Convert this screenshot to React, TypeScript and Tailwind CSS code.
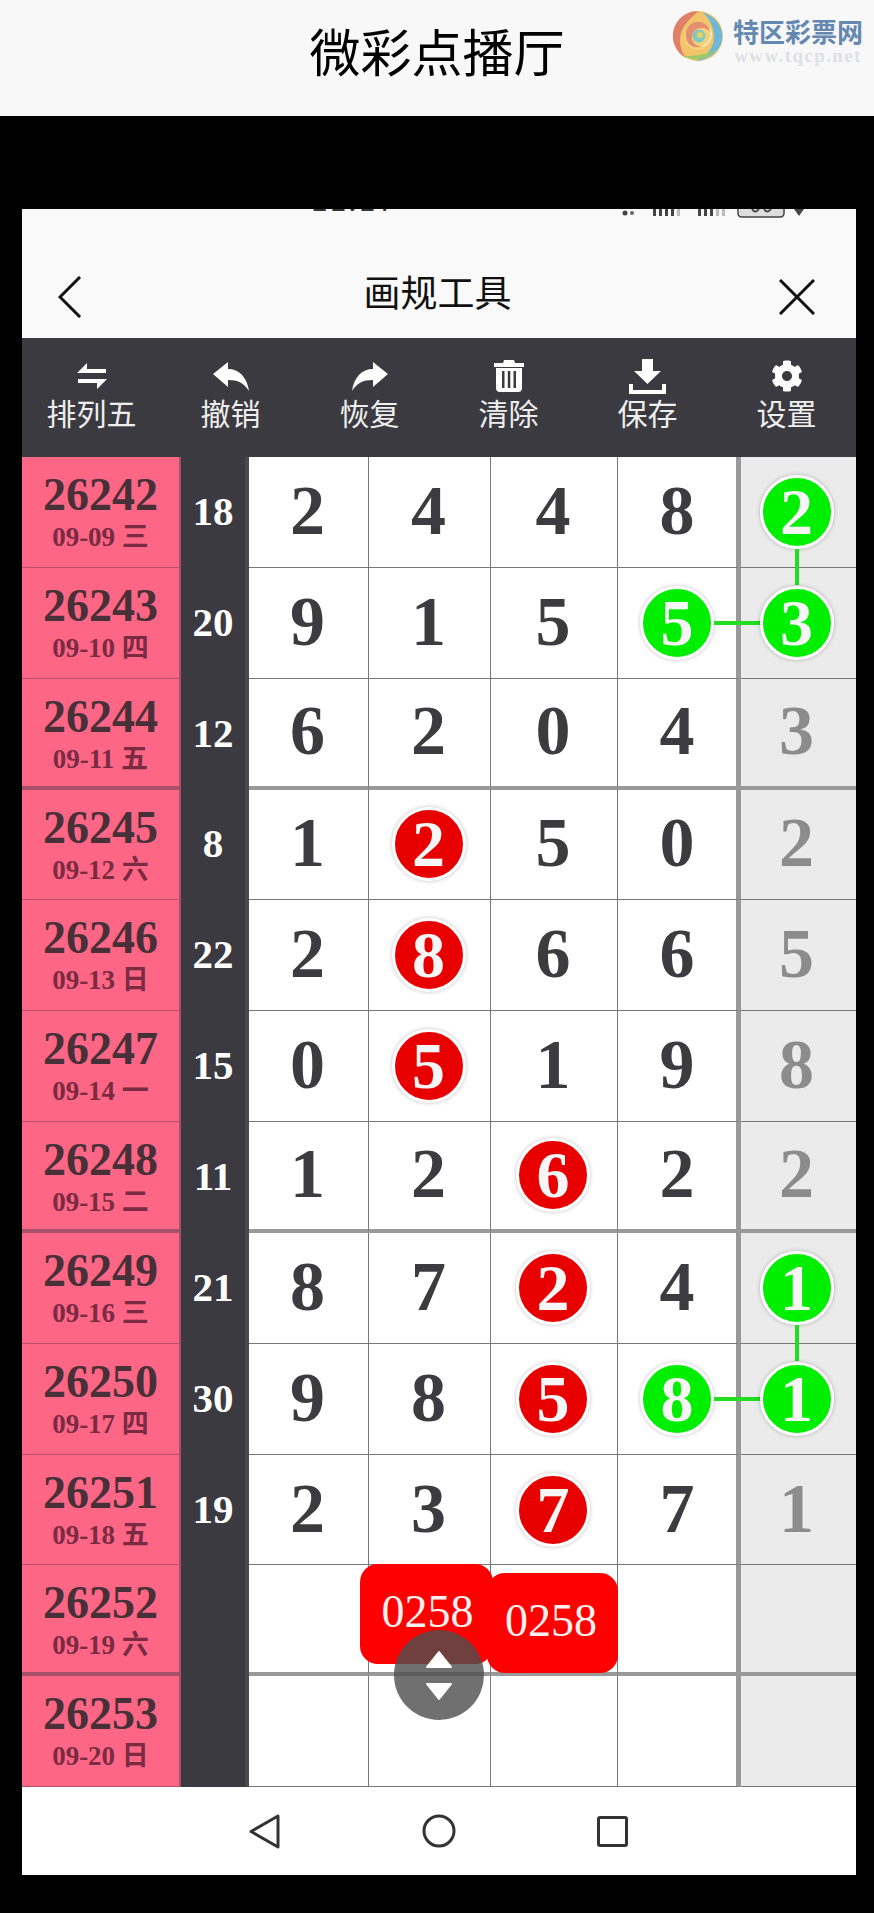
import React from 'react';
import { FaCog } from 'react-icons/fa';

type Mark = { v: number; c?: 'r' | 'g'; down?: boolean; right?: boolean };

const colWidths = ['w-[120px] pr-[2px]', 'w-[122px] pr-[2px]', 'w-[127px] pr-[2px]', 'w-[123px]', 'w-[115px] pr-[4px]'];

const rows: { id: string; date: string; sum: number; nums: (number | Mark)[] }[] = [
  { id: '26242', date: '09-09 三', sum: 18, nums: [2, 4, 4, 8, { v: 2, c: 'g', down: true }] },
  { id: '26243', date: '09-10 四', sum: 20, nums: [9, 1, 5, { v: 5, c: 'g', right: true }, { v: 3, c: 'g' }] },
  { id: '26244', date: '09-11 五', sum: 12, nums: [6, 2, 0, 4, 3] },
  { id: '26245', date: '09-12 六', sum: 8, nums: [1, { v: 2, c: 'r' }, 5, 0, 2] },
  { id: '26246', date: '09-13 日', sum: 22, nums: [2, { v: 8, c: 'r' }, 6, 6, 5] },
  { id: '26247', date: '09-14 一', sum: 15, nums: [0, { v: 5, c: 'r' }, 1, 9, 8] },
  { id: '26248', date: '09-15 二', sum: 11, nums: [1, 2, { v: 6, c: 'r' }, 2, 2] },
  { id: '26249', date: '09-16 三', sum: 21, nums: [8, 7, { v: 2, c: 'r' }, 4, { v: 1, c: 'g', down: true }] },
  { id: '26250', date: '09-17 四', sum: 30, nums: [9, 8, { v: 5, c: 'r' }, { v: 8, c: 'g', right: true }, { v: 1, c: 'g' }] },
  { id: '26251', date: '09-18 五', sum: 19, nums: [2, 3, { v: 7, c: 'r' }, 7, 1] },
  { id: '26252', date: '09-19 六', sum: 0, nums: [] },
  { id: '26253', date: '09-20 日', sum: 0, nums: [] },
];

const Ball = ({ m }: { m: Mark }) => (
  <div
    className={`relative z-10 flex h-[74px] w-[74px] items-center justify-center rounded-full border-[3px] border-white text-[66px] leading-none font-bold text-[#f6f6f6] shadow-[0_0_4px_rgba(0,0,0,0.25)] ${
      m.c === 'r' ? 'bg-[#e80000]' : 'bg-[#00ee00]'
    }`}
  >
    {m.v}
    {m.down && <div className="absolute top-[71px] left-[32px] h-[36px] w-[4px] bg-[#22dd22]" />}
    {m.right && <div className="absolute top-[32px] left-[71px] h-[4px] w-[48px] bg-[#22dd22]" />}
  </div>
);

const SwapIcon = () => (
  <svg width="30" height="26" viewBox="0 0 30 26" fill="#fff">
    <path d="M10 0 L10 6 L29 6 L29 10 L0 10 Z" />
    <path d="M20 26 L20 20 L1 20 L1 16 L30 16 Z" />
  </svg>
);

const UndoIcon = () => (
  <svg width="36" height="29" viewBox="0 0 36 29" fill="#fff">
    <path d="M0 12 L15 0 L15 7 C26 7 34 15 36 29 C31 21 25 18 15 18 L15 25 Z" />
  </svg>
);

const RedoIcon = () => (
  <svg width="36" height="29" viewBox="0 0 36 29" fill="#fff">
    <path d="M36 12 L21 0 L21 7 C10 7 2 15 0 29 C5 21 11 18 21 18 L21 25 Z" />
  </svg>
);

const TrashIcon = () => (
  <svg width="30" height="32" viewBox="0 0 30 32" fill="#fff">
    <path d="M10 0 H20 L21 3 H30 V7 H0 V3 H9 Z" />
    <path fillRule="evenodd" d="M2 8 H28 V28 Q28 32 24 32 H6 Q2 32 2 28 Z M8 11 V28 H10.5 V11 Z M13.8 11 V28 H16.3 V11 Z M19.5 11 V28 H22 V11 Z" />
  </svg>
);

const SaveIcon = () => (
  <svg width="37" height="35" viewBox="0 0 37 35" fill="#fff">
    <path d="M13 0 H24 V12 H32 L18.5 25 L5 12 H13 Z" />
    <path d="M0 25 H4 V31 H33 V25 H37 V35 H0 Z" />
  </svg>
);

const tools = [
  { label: '排列五', icon: <SwapIcon /> },
  { label: '撤销', icon: <UndoIcon /> },
  { label: '恢复', icon: <RedoIcon /> },
  { label: '清除', icon: <TrashIcon /> },
  { label: '保存', icon: <SaveIcon /> },
  { label: '设置', icon: <FaCog size={32} color="#fff" /> },
];

const Logo = () => (
  <svg width="52" height="52" viewBox="0 0 52 52" fill="none" className="blur-[0.6px]">
    <circle cx="26" cy="26" r="25" fill="#f2c56a" />
    <path d="M26 1 A25 25 0 0 0 14 48 C6 38 6 22 14 14 C18 8 24 4 26 1 Z" fill="#e0806a" />
    <path d="M30 2 C44 6 52 18 50 30 C48 42 36 50 24 51 C34 46 42 38 42 28 C42 18 38 8 30 2 Z" fill="#6fb8d8" />
    <path d="M12 46 C22 52 36 50 44 40 C36 44 24 46 12 46 Z" fill="#9cc86a" />
    <circle cx="26" cy="26" r="14" fill="#f4d27a" />
    <path d="M14 26 A12 12 0 0 1 38 22 C34 16 22 16 20 26 C19 32 24 37 30 36 C22 40 14 34 14 26 Z" fill="#e58f72" />
    <circle cx="27" cy="26" r="6.5" fill="#7fc9c4" />
    <circle cx="28" cy="25" r="3" fill="#e8d25a" />
    <path d="M30 36 C38 34 41 26 38 19" stroke="#fff" strokeWidth="1.2" opacity="0.7" />
  </svg>
);

export default function App() {
  return (
    <div className="h-[1913px] bg-black font-['Liberation_Serif','Noto_Sans_CJK_SC',serif] overflow-hidden">
      {/* page header */}
      <header className="relative flex h-[116px] items-center justify-center bg-[#f8f8f8] pb-[16px]">
        <h1 className="font-['Noto_Sans_CJK_SC',sans-serif] text-[51px] leading-none font-normal text-black">微彩点播厅</h1>
        <div className="absolute top-[10px] left-[672px] flex gap-[9px]">
          <Logo />
          <div className="flex flex-col items-center">
            <span className="mt-[8px] font-['Noto_Sans_CJK_SC',sans-serif] text-[26px] leading-[26px] font-bold text-[#6488b0]">特区彩票网</span>
            <span className="mt-[4px] text-[19px] leading-[16px] font-bold tracking-[1.4px] text-[#dfe0e4]">www.tqcp.net</span>
          </div>
        </div>
      </header>

      <div className="h-[93px]" />

      <div className="mx-[22px] w-[834px] bg-white">
        {/* what is left of the phone status bar */}
        <div className="relative h-[9px] overflow-hidden bg-[#f9f9f9]">
          <span className="absolute -top-[29px] left-[289px] font-['Noto_Sans_CJK_SC',sans-serif] text-[30px] leading-[36px] tracking-[2px] text-[#333]">11:17</span>
          <svg width="200" height="9" viewBox="0 0 200 9" className="absolute top-0 left-[598px]">
            <circle cx="5" cy="4" r="2.5" fill="#444" />
            <circle cx="12" cy="4" r="2" fill="#666" />
            <path d="M33 0h3v7h-3zM39 0h3v7h-3zM45 0h3v7h-3zM51 0h3v7h-3z" fill="#444" />
            <path d="M57 0h3v7h-3z" fill="#bbb" />
            <path d="M78 0h3v7h-3zM84 0h3v7h-3zM90 0h3v7h-3z" fill="#444" />
            <path d="M96 0h3v7h-3zM102 0h3v7h-3z" fill="#bbb" />
            <path d="M118 0v4q0 4 4 4h38q4 0 4-4v-4" fill="#ddd" stroke="#444" strokeWidth="1.5" />
            <path d="M132 0q3 5 7 0M144 0q3 5 7 0" fill="none" stroke="#444" strokeWidth="2" />
            <path d="M174 0h10l-5 7z" fill="#444" />
          </svg>
        </div>

        {/* nav bar */}
        <div className="grid h-[120px] grid-cols-[1fr_auto_1fr] items-center bg-[#f9f9f9] pt-[38px] pr-[41px] pl-[36px]">
          <svg width="24" height="42" viewBox="0 0 24 42" fill="none" stroke="#111" strokeWidth="3">
            <path d="M22 1 L2 21 L22 41" />
          </svg>
          <div className="-mt-[12px] ml-[2px] font-['Noto_Sans_CJK_SC',sans-serif] text-[37px] leading-none text-[#111]">画规工具</div>
          <svg width="36" height="36" viewBox="0 0 36 36" fill="none" stroke="#111" strokeWidth="3" className="justify-self-end">
            <path d="M1 1 L35 35 M35 1 L1 35" />
          </svg>
        </div>

        {/* toolbar */}
        <div className="grid h-[119px] grid-cols-6 bg-[#3a3a40] pt-[20px]">
          {tools.map((t) => (
            <div key={t.label} className="flex flex-col items-center">
              <div className="flex h-[36px] items-center justify-center">{t.icon}</div>
              <span className="font-['Noto_Sans_CJK_SC',sans-serif] text-[30px] leading-[36px] text-[#eeeeee]">{t.label}</span>
            </div>
          ))}
        </div>

        {/* number table */}
        <div className="relative flex flex-col">
          {rows.map((r, i) => {
            const thick = i === 2 || i === 6 || i === 10;
            return (
              <div key={r.id} className="flex h-[110.85px]">
                <div
                  className={`flex w-[159px] flex-col items-center border-r-2 border-r-[#a85068] bg-[#fe6686] pt-[12px] ${
                    thick ? 'border-b-4 border-b-[#a85068]' : 'border-b border-b-[#b8506a]'
                  }`}
                >
                  <span className="text-[46px] leading-[52px] font-bold text-[#473038]">{r.id}</span>
                  <span className="mt-[1px] text-[27px] leading-[30px] font-bold text-[#7a2a42]">{r.date}</span>
                </div>
                <div className="flex w-[68px] items-center justify-center border-r-4 border-r-[#4a4a4c] bg-[#3a3a40] pb-[2px] text-[41px] leading-none font-bold text-white">
                  {r.sum > 0 ? r.sum : ''}
                </div>
                {colWidths.map((w, c) => {
                  const n = r.nums[c];
                  const last = c === 4;
                  const right = last ? '' : c === 3 ? 'border-r-[5px] border-r-[#999999]' : 'border-r border-r-[#777777]';
                  const bottom = thick ? 'border-b-4 border-b-[#999999]' : 'border-b border-b-[#777777]';
                  return (
                    <div
                      key={c}
                      className={`flex items-center justify-center text-[70px] leading-none font-bold ${w} ${right} ${bottom} ${
                        last ? 'bg-[#ebebeb] text-[#8c8c8c]' : 'bg-white text-[#3c3c40]'
                      }`}
                    >
                      {typeof n === 'object' ? <Ball m={n} /> : <span className="-mt-[2px]">{n}</span>}
                    </div>
                  );
                })}
              </div>
            );
          })}

          {/* bubbles and the floating scroll button sit over the table */}
          <div className="absolute top-[1107px] left-[338px] z-20 flex h-[100px] w-[133px] items-start justify-center rounded-[18px] bg-[#fe0000] pt-[22px] pl-[2px] text-[46px] leading-[52px] text-[#fdf0f0]">
            0258
          </div>
          <div className="absolute top-[1116px] left-[465px] z-20 flex h-[100px] w-[131px] items-start justify-center rounded-[18px] bg-[#fe0000] pt-[22px] pr-[3px] text-[46px] leading-[52px] text-[#fdf0f0]">
            0258
          </div>
          <div className="absolute top-[1173px] left-[372px] z-30 flex h-[90px] w-[90px] flex-col items-center justify-center gap-[13px] rounded-full bg-[rgba(79,79,79,0.81)]">
            <svg width="28" height="19" viewBox="0 0 28 19" fill="#fff" stroke="#fff" strokeWidth="2" strokeLinejoin="round">
              <path d="M14 2 L26 17 H2 Z" />
            </svg>
            <svg width="28" height="19" viewBox="0 0 28 19" fill="#fff" stroke="#fff" strokeWidth="2" strokeLinejoin="round">
              <path d="M14 17 L26 2 H2 Z" />
            </svg>
          </div>
        </div>

        {/* android nav buttons */}
        <div className="flex h-[88px] items-center justify-center gap-[141px] bg-white pr-[2px]">
          <svg width="32" height="35" viewBox="0 0 32 35" fill="none" stroke="#333" strokeWidth="3" strokeLinejoin="round">
            <path d="M29 2 V33 L2 17.5 Z" />
          </svg>
          <svg width="34" height="34" viewBox="0 0 34 34" fill="none" stroke="#333" strokeWidth="3">
            <circle cx="17" cy="17" r="15" />
          </svg>
          <svg width="31" height="31" viewBox="0 0 31 31" fill="none" stroke="#333" strokeWidth="3" strokeLinejoin="round">
            <rect x="1.5" y="1.5" width="28" height="28" rx="1.5" />
          </svg>
        </div>
      </div>
    </div>
  );
}
